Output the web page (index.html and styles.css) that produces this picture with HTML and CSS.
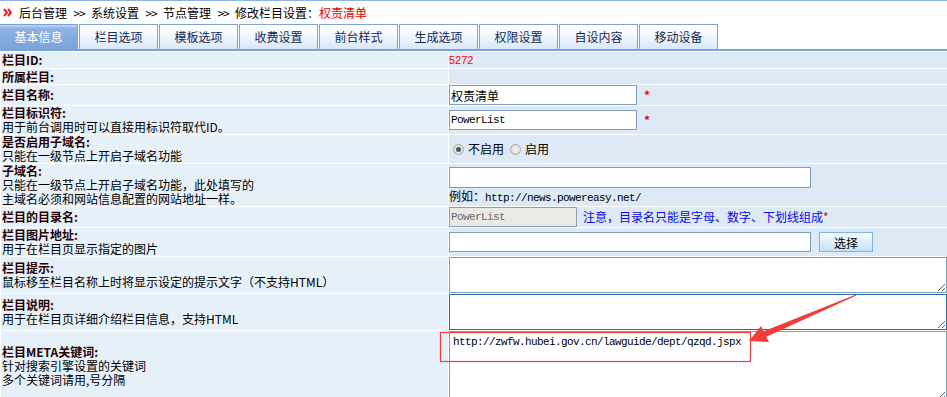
FILE: index.html
```html
<!DOCTYPE html>
<html lang="zh-CN">
<head>
  <meta charset="UTF-8" />
  <title>修改栏目设置</title>
  <link rel="stylesheet" href="styles.css">
</head>
<body>
  <div class="crumb">
    <svg class="crumb-icon" width="10" height="9" viewBox="0 0 10 9">
      <path d="M1 1 L4 4.5 L1 8 M5 1 L8 4.5 L5 8" fill="none" stroke="#e0202a" stroke-width="2"/>
    </svg>
    <span>后台管理</span><span class="sep">&gt;&gt;</span>
    <span>系统设置</span><span class="sep">&gt;&gt;</span>
    <span>节点管理</span><span class="sep">&gt;&gt;</span>
    <span>修改栏目设置：<em class="red">权责清单</em></span>
  </div>

  <div class="tabs">
    <div class="tab active">基本信息</div>
    <div class="tab">栏目选项</div>
    <div class="tab">模板选项</div>
    <div class="tab">收费设置</div>
    <div class="tab">前台样式</div>
    <div class="tab">生成选项</div>
    <div class="tab">权限设置</div>
    <div class="tab">自设内容</div>
    <div class="tab">移动设备</div>
  </div>

  <div class="form">
    <div class="lbl"><b>栏目ID:</b></div>
    <div class="val"><span class="num">5272</span></div>

    <div class="lbl"><b>所属栏目:</b></div>
    <div class="val"></div>

    <div class="lbl"><b>栏目名称:</b></div>
    <div class="val"><input class="txt short" value="权责清单"><span class="req">*</span></div>

    <div class="lbl"><b>栏目标识符:</b><span>用于前台调用时可以直接用标识符取代ID。</span></div>
    <div class="val"><input class="txt short mono" value="PowerList"><span class="req">*</span></div>

    <div class="lbl"><b>是否启用子域名:</b><span>只能在一级节点上开启子域名功能</span></div>
    <div class="val radios">
      <label><i class="radio on"></i>不启用</label>
      <label><i class="radio"></i>启用</label>
    </div>

    <div class="lbl"><b>子域名:</b><span>只能在一级节点上开启子域名功能，此处填写的</span><span>主域名必须和网站信息配置的网站地址一样。</span></div>
    <div class="val stack">
      <input class="txt long">
      <span class="hint">例如：<span class="mono">http://news.powereasy.net/</span></span>
    </div>

    <div class="lbl"><b>栏目的目录名:</b></div>
    <div class="val"><input class="txt dir mono" value="PowerList" disabled><span class="note">注意，目录名只能是字母、数字、下划线组成</span><span class="req">*</span></div>

    <div class="lbl"><b>栏目图片地址:</b><span>用于在栏目页显示指定的图片</span></div>
    <div class="val"><input class="txt long"><button class="pick">选择</button></div>

    <div class="lbl"><b>栏目提示:</b><span>鼠标移至栏目名称上时将显示设定的提示文字（不支持HTML）</span></div>
    <div class="val"><textarea class="area"></textarea></div>

    <div class="lbl"><b>栏目说明:</b><span>用于在栏目页详细介绍栏目信息，支持HTML</span></div>
    <div class="val"><textarea class="area focus"></textarea></div>

    <div class="lbl"><b>栏目META关键词:</b><span>针对搜索引擎设置的关键词</span><span>多个关键词请用,号分隔</span></div>
    <div class="val"><textarea class="area mono">http://zwfw.hubei.gov.cn/lawguide/dept/qzqd.jspx</textarea></div>
  </div>

  <svg class="mark" width="947" height="397" viewBox="0 0 947 397">
    <rect x="440.5" y="332.5" width="310" height="29" fill="none" stroke="#f53a3a" stroke-width="1.2"/>
    <polygon points="749,341 761,326 763.7,331.3 856,294.4 856.3,295.6 766.3,336.7 769,342" fill="#f23c3c"/>
  </svg>
</body>
</html>
```

FILE: styles.css
```css
body {
  margin: 0;
  font-family: "Noto Sans CJK SC", sans-serif;
  font-size: 12px;
  line-height: 14px;
  color: #000;
  background-color: #fff;
  border-top: 1px solid #8db4e0;
  overflow: hidden;
  position: relative;
}

.crumb {
  display: flex;
  align-items: center;
  height: 23px;
  padding-left: 3px;
}

.crumb-icon {
  margin-right: 6px;
}

.crumb span {
  margin-right: 6px;
}

.crumb .sep {
  display: inline-block;
  width: 12px;
  text-align: center;
  letter-spacing: -1px;
}

.red {
  color: #ee0000;
  font-style: normal;
}

.tabs {
  display: flex;
  height: 25px;
  border-bottom: 2px solid #7aa4d8;
  margin-bottom: 1px;
}

.tab {
  width: 79px;
  height: 25px;
  box-sizing: border-box;
  margin-right: 1px;
  border: 1px solid #7ba3d6;
  border-bottom: none;
  background: linear-gradient(#ffffff, #f4f8fe 40%, #d9e7f8);
  color: #102a58;
  display: flex;
  align-items: center;
  justify-content: center;
}

.tab:first-child {
  margin-left: -1px;
}

.tab.active {
  background: linear-gradient(#c3d8f2, #8fb2e2 15%, #7aa3d8);
  border-color: #7aa3d8;
  color: #fff;
}

.form {
  display: grid;
  grid-template-columns: 447px 1fr;
  grid-template-rows: 16px 15px 20px 28px 28px 42px 20px 28px 36px 36px 70px;
  gap: 1px;
  padding-left: 1px;
}

.lbl {
  background-color: #e5f0f8;
  display: flex;
  flex-direction: column;
  justify-content: center;
  padding-left: 1px;
}

.lbl b {
  color: #2a0404;
}

.val {
  background-color: #dde9f4;
  display: flex;
  align-items: center;
}

.num {
  font-family: "Liberation Sans", sans-serif;
  font-size: 11px;
  color: #ff0000;
}

.mono {
  font-family: "Liberation Mono", "Noto Sans CJK SC", monospace;
  font-size: 11px;
  letter-spacing: -0.6px;
}

.txt {
  height: 20px;
  box-sizing: border-box;
  border: 1px solid #7f9db9;
  padding: 0 1px;
  font-family: "Noto Sans CJK SC", sans-serif;
  font-size: 12px;
  background-color: #fff;
  color: #000;
  outline: none;
}

.txt.mono {
  font-family: "Liberation Mono", monospace;
  font-size: 11px;
}

.short {
  width: 188px;
}

.long {
  width: 362px;
}

.dir {
  width: 128px;
  background-color: #ebe9e3;
  color: #6b6b6b;
  border-color: #8e9fb3;
}

.req {
  color: #ee0000;
  font-weight: bold;
  margin-left: 7px;
}

.dir + .note {
  margin-left: 6px;
}

.note {
  color: #0a0aee;
}

.note + .req {
  margin-left: 0;
  font-weight: normal;
}

.radios {
  padding-left: 4px;
}

.radios label {
  display: flex;
  align-items: center;
  margin-right: 6px;
}

.radio {
  width: 11px;
  height: 11px;
  border-radius: 50%;
  border: 1px solid #a9a9a9;
  background: radial-gradient(#f2f2f2, #d6d6d6);
  margin-right: 4px;
  box-sizing: border-box;
  position: relative;
}

.radio.on::after {
  content: "";
  position: absolute;
  left: 2px;
  top: 2px;
  width: 5px;
  height: 5px;
  border-radius: 50%;
  background-color: #555;
}

.stack {
  flex-direction: column;
  align-items: flex-start;
  justify-content: flex-start;
  padding-top: 3px;
}

.stack .txt {
  height: 21px;
}

.hint {
  margin-top: 1px;
}

.pick {
  width: 54px;
  height: 20px;
  margin-left: 8px;
  border: 1px solid #80b5e0;
  background: linear-gradient(#f6fbff, #d8ecfb 60%, #c2e0f6);
  font-family: "Noto Sans CJK SC", sans-serif;
  font-size: 12px;
  padding: 0;
  color: #000;
}

.area {
  align-self: stretch;
  width: 100%;
  box-sizing: border-box;
  border: 1px solid #7f9db9;
  margin: 0;
  padding: 2px;
  background-color: #fff;
  font-family: "Noto Sans CJK SC", sans-serif;
  font-size: 12px;
  outline: none;
}

.area.mono {
  font-family: "Liberation Mono", monospace;
  font-size: 11px;
  letter-spacing: -0.6px;
  padding: 4px 3px;
}

.area.focus {
  border: 1px solid #2f66b0;
}

.mark {
  position: absolute;
  left: 0;
  top: -1px;
  pointer-events: none;
}
```
